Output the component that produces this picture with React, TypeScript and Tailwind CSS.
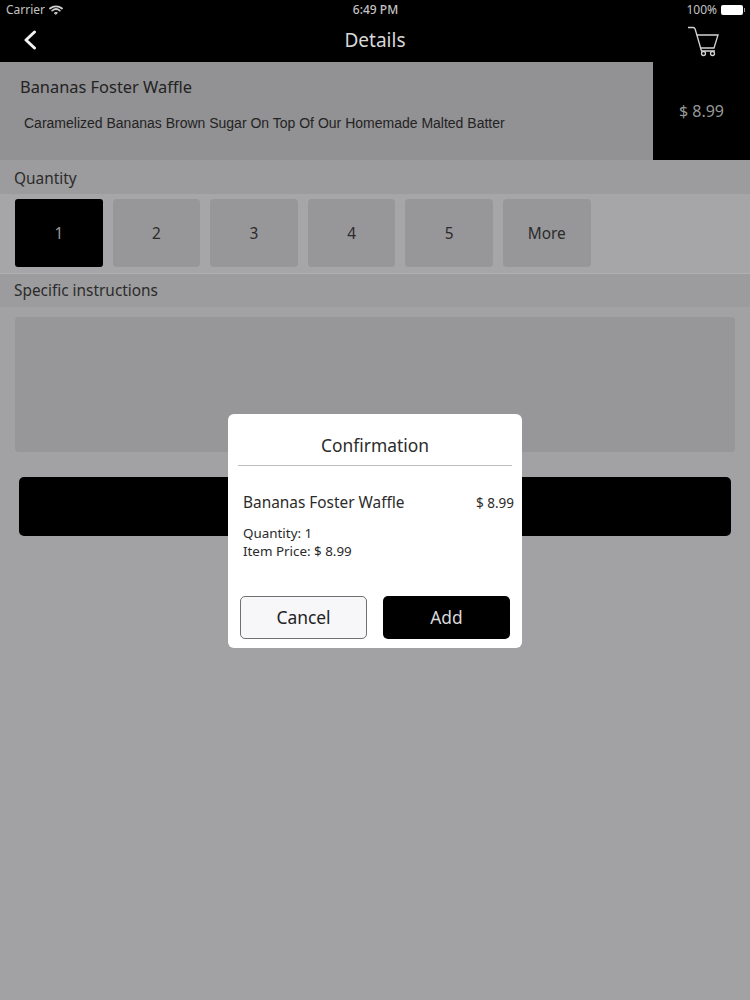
const font = "font-['Noto_Sans','Open_Sans',sans-serif]";

function WifiIcon() {
  return (
    <svg width="14" height="10" viewBox="0 0 14 10" fill="none" stroke="#d0d0d0" strokeLinecap="round">
      <path d="M1 3.5C4.4 .6 9.6 .6 13 3.5" strokeWidth="1.8" />
      <path d="M3.2 5.6C5.4 3.8 8.6 3.8 10.8 5.6" strokeWidth="1.8" />
      <path d="M5.6 7.8C6.4 7.2 7.6 7.2 8.4 7.8L7 9.2Z" fill="#d0d0d0" strokeWidth="1" />
    </svg>
  );
}

function CartIcon() {
  return (
    <svg width="32" height="32" viewBox="0 0 32 32" fill="none" stroke="#d4d4d4" strokeWidth="1.3">
      <path d="M1 2.5H6C7.2 2.5 7.8 3 8.2 4.2L14.5 26H28" />
      <path d="M9.8 10H31L27 23H13.6" />
      <circle cx="16.5" cy="28.5" r="2" />
      <circle cx="25.5" cy="28.5" r="2" />
    </svg>
  );
}

export default function App() {
  const quantities = ["1", "2", "3", "4", "5", "More"];

  return (
    <div className={`${font} relative h-[1000px] w-[750px] overflow-hidden bg-[#a2a1a3]`}>
      <div className="flex h-[62px] flex-col bg-black">
        <div className="flex h-5 items-center justify-between pl-[6px] pr-[5px] text-[12px] text-[#c4c4c4]">
          <div className="flex w-[200px] items-center gap-[4px]">
            <span>Carrier</span>
            <WifiIcon />
          </div>
          <span className="font-medium">6:49 PM</span>
          <div className="flex w-[200px] items-center justify-end gap-[4px]">
            <span>100%</span>
            <div className="flex items-center gap-px">
              <div className="h-[10px] w-[22px] rounded-[2px] bg-white" />
              <div className="h-[4px] w-px bg-[#999999]" />
            </div>
          </div>
        </div>
        <div className="relative flex flex-1 items-center justify-center pb-[2px] text-[19px] text-[#d8d8d8]">
          <svg className="absolute left-[23px] top-[10px]" width="14" height="20" viewBox="0 0 14 20" fill="none" stroke="#f2f2f2" strokeWidth="3" strokeLinecap="round" strokeLinejoin="round">
            <path d="M11.5 2L3 10L11.5 18" />
          </svg>
          Details
          <div className="absolute right-[31px] top-[5px]">
            <CartIcon />
          </div>
        </div>
      </div>

      <div className="flex h-[98px] bg-[#929193]">
        <div className="flex-1 pl-5 pt-[13px] text-[#232323]">
          <div className="text-[16.4px] leading-6">Bananas Foster Waffle</div>
          <div className="mt-[14px] pl-[4px] font-['Liberation_Sans',sans-serif] text-[14px] leading-5">
            Caramelized Bananas Brown Sugar On Top Of Our Homemade Malted Batter
          </div>
        </div>
        <div className="flex w-[97px] items-center justify-center bg-black text-[16px] text-[#999999]">$ 8.99</div>
      </div>

      <div className="flex h-[34px] items-center bg-[#9c9b9d] pl-[14px] pt-[3px] text-[15.4px] text-[#2b2b2b]">Quantity</div>

      <div className="flex h-[79px] gap-[10px] bg-[#a6a5a7] pl-[15px] pt-[5px]">
        {quantities.map((q, i) => (
          <div
            key={q}
            className={
              i === 0
                ? "flex h-[68px] w-[87.6px] items-center justify-center rounded-[3px] bg-black pt-[2px] text-[15.4px] text-[#9a9a9a]"
                : "flex h-[68px] w-[87.6px] items-center justify-center rounded-[4px] bg-[#979698] pt-[2px] text-[15.4px] text-[#2b2b2b]"
            }
          >
            {q}
          </div>
        ))}
      </div>

      <div className="flex h-[34px] items-center border-t border-[#b0afb1] bg-[#9c9b9d] pl-[14px] text-[15.4px] text-[#2b2b2b]">
        Specific instructions
      </div>

      <div className="mx-[15px] mt-[10px] h-[135px] rounded-[4px] bg-[#979698]" />

      <div className="mx-[19px] mt-[25px] h-[59px] rounded-[5px] bg-black" />

      <div className="absolute left-[228px] top-[414px] h-[234px] w-[294px] rounded-[6px] bg-white px-[10px] text-[#2b2b2b]">
        <div className="flex h-[52px] items-center justify-center border-b border-[#bdbdbd] pt-[12px] text-[17.4px]">Confirmation</div>
        <div className="mt-[25px] flex items-center justify-between pl-[5px] text-[15.4px] leading-6">
          <span>Bananas Foster Waffle</span>
          <span className="-mr-[2px] text-[13.5px]">$ 8.99</span>
        </div>
        <div className="mt-[9px] pl-[5px] text-[13.4px] leading-[18px]">
          <div>Quantity: 1</div>
          <div>Item Price: $ 8.99</div>
        </div>
        <div className="mt-[36px] flex justify-between px-[2px]">
          <div className="flex h-[43px] w-[127px] items-center justify-center rounded-[5px] border border-[#707070] bg-[#f7f7f9] text-[17.4px] text-[#222222]">Cancel</div>
          <div className="flex h-[43px] w-[127px] items-center justify-center rounded-[5px] bg-black text-[17.4px] text-[#d8d8d8]">Add</div>
        </div>
      </div>
    </div>
  );
}
